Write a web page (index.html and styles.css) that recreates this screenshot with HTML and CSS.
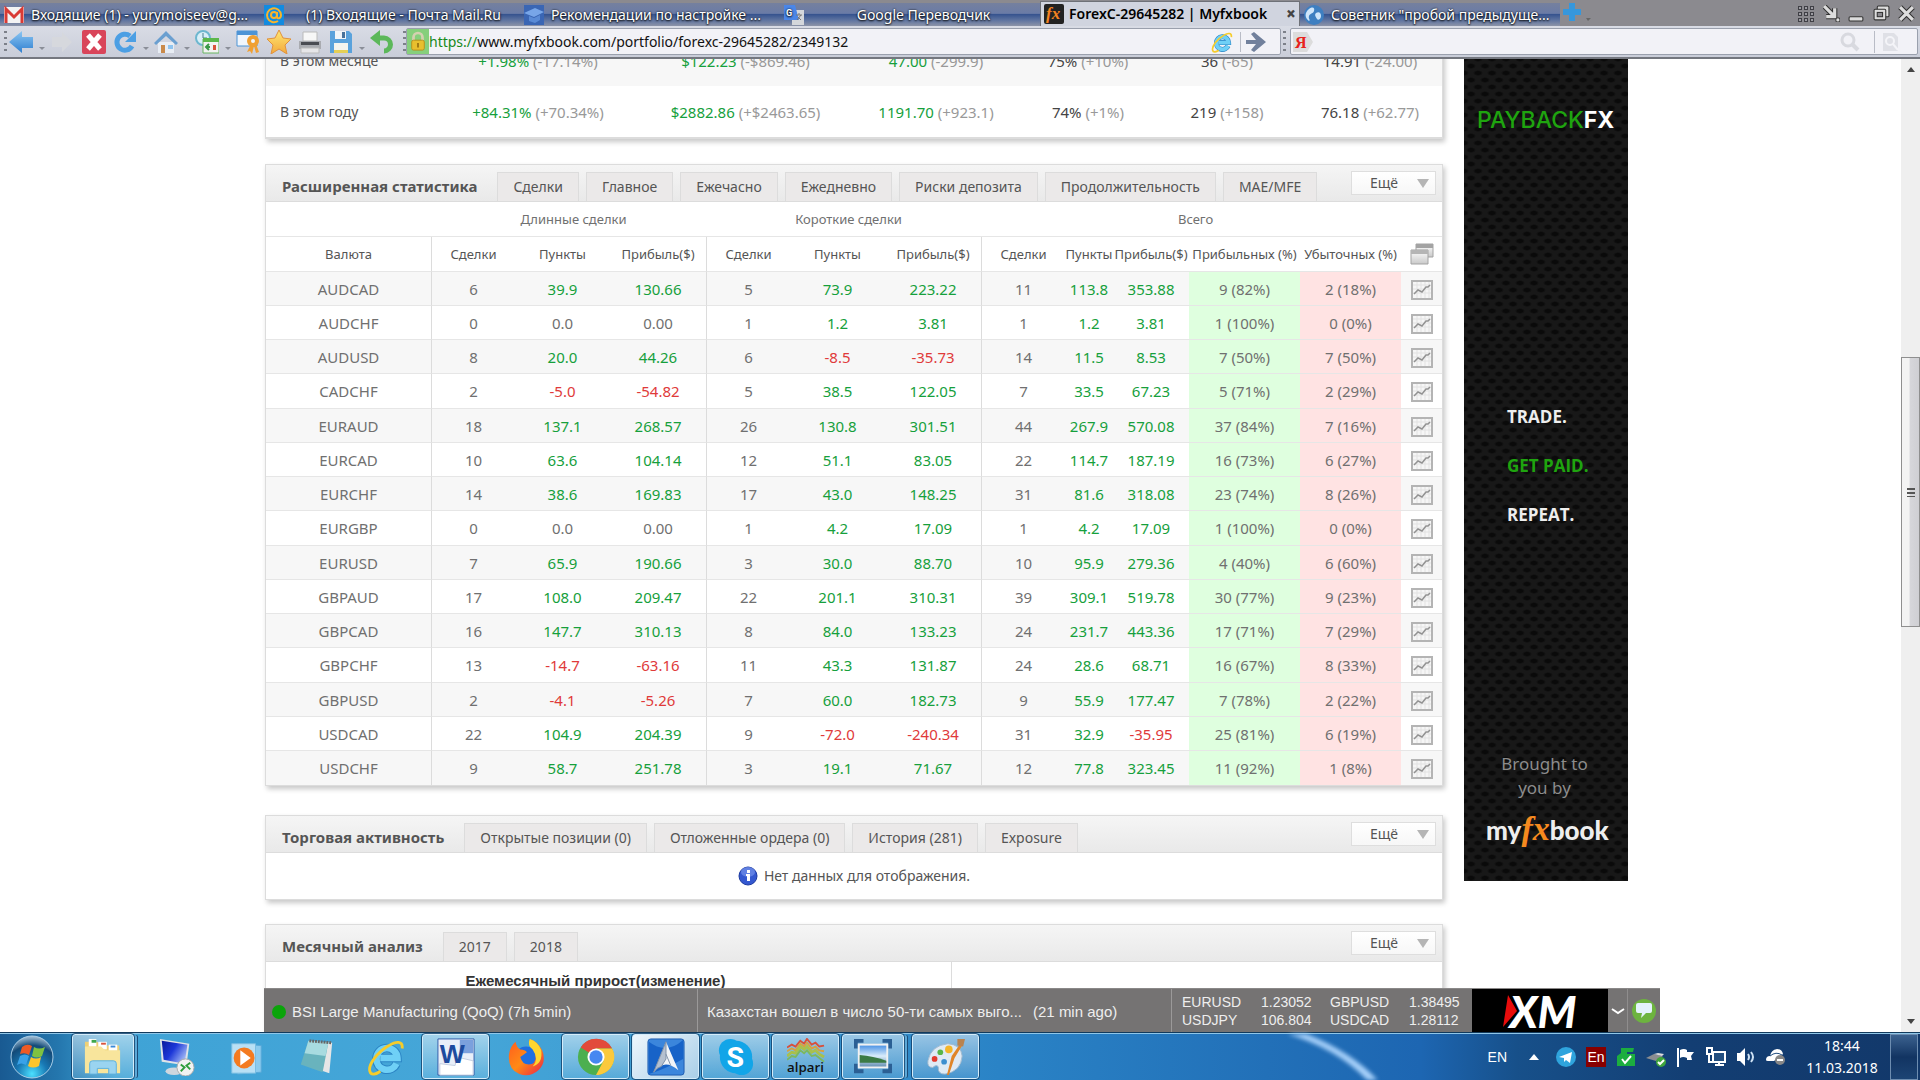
FILE: index.html
```html
<!DOCTYPE html>
<html lang="ru">
<head>
<meta charset="utf-8">
<title>ForexC-29645282 | Myfxbook</title>
<link rel="stylesheet" href="styles.css">
</head>
<body>
<svg class="defs" aria-hidden="true">
  <defs>
    <linearGradient id="gBlue" x1="0" y1="0" x2="0" y2="1"><stop offset="0" stop-color="#8cc6f2"/><stop offset="1" stop-color="#2f7fd0"/></linearGradient>
    <linearGradient id="gGold" x1="0" y1="0" x2="0" y2="1"><stop offset="0" stop-color="#ffe873"/><stop offset="1" stop-color="#f3a93c"/></linearGradient>
    <linearGradient id="gGrey" x1="0" y1="0" x2="0" y2="1"><stop offset="0" stop-color="#ffffff"/><stop offset="1" stop-color="#c9c9c9"/></linearGradient>
    <linearGradient id="gFire" x1="0" y1="0" x2="1" y2="1"><stop offset="0" stop-color="#ff5a1f"/><stop offset="0.5" stop-color="#ff8a16"/><stop offset="1" stop-color="#e8204a"/></linearGradient>
    <radialGradient id="gOrb" cx="0.5" cy="0.9" r="0.9"><stop offset="0" stop-color="#4be0ff"/><stop offset="0.4" stop-color="#1878b4"/><stop offset="0.75" stop-color="#134a78"/><stop offset="1" stop-color="#a9c3d8"/></radialGradient>
    <linearGradient id="gScreen" x1="0" y1="0" x2="1" y2="0.6"><stop offset="0" stop-color="#0a1a9c"/><stop offset="0.5" stop-color="#1c37d8"/><stop offset="1" stop-color="#9fb6f5"/></linearGradient>
    <linearGradient id="gSky" x1="0" y1="0" x2="0" y2="1"><stop offset="0" stop-color="#4f95e6"/><stop offset="0.5" stop-color="#d9ecfb"/><stop offset="1" stop-color="#6a93b5"/></linearGradient>
    <symbol id="chart" viewBox="0 0 22 20"><rect x="1" y="1" width="20" height="18" fill="#f6f6f6" stroke="#b4b4b4" stroke-width="2"/><path d="M6 2v16M10 2v16M14 2v16M18 2v16M2 5h18M2 9h18M2 13h18" stroke="#e2e2e2" fill="none"/><path d="M3 14l4-4 4 2 4-5 2 0 2-2" fill="none" stroke="#929292" stroke-width="1.5"/></symbol>
    <symbol id="ie" viewBox="0 0 40 40"><path d="M31 27a11 11 0 0 1-21-5 11 11 0 0 1 22-1H14" fill="none" stroke="#2b84c4" stroke-width="9"/><path d="M31 27a11 11 0 0 1-21-5 11 11 0 0 1 22-1H14" fill="none" stroke="#6fd0f6" stroke-width="7"/><path d="M37 11c1-8-6-8-14-3C11 15 1 28 3 35c1 5 7 3 11 0" fill="none" stroke="#f6cc2b" stroke-width="3"/></symbol>
  </defs>
</svg>
<div class="screen">
  <header class="tabstrip">
    <nav class="browser-tabs">
      <a class="btab" href="#"><svg viewBox="0 0 20 16"><rect width="20" height="16" fill="#f3f3f3"/><path d="M2 16V2l8 8 8-8v14" fill="none" stroke="#d93a34" stroke-width="3"/></svg><span>Входящие (1) - yurymoiseev@g...</span></a>
      <a class="btab center" href="#"><svg viewBox="0 0 20 20"><rect width="20" height="20" fill="#128be0"/><circle cx="10" cy="10" r="3" fill="none" stroke="#f8b42c" stroke-width="2"/><path d="M13 7v5c0 2 4 2 4-2a7 7 0 1 0-3 6" fill="none" stroke="#f8b42c" stroke-width="2"/></svg><span>(1) Входящие - Почта Mail.Ru</span></a>
      <a class="btab" href="#"><svg viewBox="0 0 20 20"><rect width="20" height="20" fill="#3a66b4"/><path d="M0 8l11-5 9 4-10 5z" fill="#78a6e8"/><path d="M5 11v5l6 2 5-3v-5l-6 3z" fill="#5a8bd6"/></svg><span>Рекомендации по настройке ...</span></a>
      <a class="btab center" href="#"><svg viewBox="0 0 20 20"><rect x="8" y="5" width="12" height="15" fill="#d4d7db"/><path d="M0 0h11l4 15H0z" fill="#4a86e8"/><text x="2" y="11" font-family="Roboto" font-size="9" font-weight="700" fill="#fff">G</text><path d="M12 10h6M15 8v2M13 15l4-5M14 12l3 3" stroke="#777" fill="none"/></svg><span>Google Переводчик</span></a>
      <a class="btab active" href="#"><svg viewBox="0 0 20 20"><rect width="20" height="20" rx="2" fill="#222"/><text x="2" y="15" font-family="Liberation Serif" font-style="italic" font-weight="700" font-size="17" fill="#f58220">fx</text></svg><span>ForexC-29645282 | Myfxbook</span><b>×</b></a>
      <a class="btab" href="#"><svg viewBox="0 0 20 20"><circle cx="10" cy="10" r="10" fill="#3e7fc1"/><path d="M5 4c4-3 6-1 5 2s-4 2-5 5 2 4 0 5c-4-3-5-8 0-12zM12 8c3-2 5 0 5 3s-3 5-4 3-3-4-1-6z" fill="#cfe5fa"/></svg><span>Советник "пробой предыдуще...</span></a>
    </nav>
    <button class="newtab" aria-label="Новая вкладка"><svg viewBox="0 0 28 20"><path d="M6 0h6v6h6v6h-6v6H6v-6H0V6h6z" fill="#3697dc"/><path d="M23 15h5l-3 3z" fill="#666"/></svg></button>
    <div class="winbtns">
      <button aria-label="Сетка"><svg viewBox="0 0 17 17"><path d="M0 3h17M0 9h17M0 15h17" stroke="#3f3f45" stroke-width="4" stroke-dasharray="4 2" /><path d="M1 3h16M1 9h16M1 15h16" stroke="#9c9ca2" stroke-width="2" stroke-dasharray="2 4"/></svg></button>
      <button aria-label="Сжать"><svg viewBox="0 0 16 16"><path d="M1 1l9 9M3 11h8V3" fill="none" stroke="#333" stroke-width="5"/><path d="M1 1l9 9M3 11h8V3" fill="none" stroke="#ddd" stroke-width="3"/><circle cx="14" cy="14" r="2" fill="#ddd" stroke="#444"/></svg></button>
      <button aria-label="Свернуть"><svg viewBox="0 0 16 16"><rect x="1" y="11" width="13" height="4" rx="1" fill="#ddd" stroke="#333"/></svg></button>
      <button aria-label="Развернуть"><svg viewBox="0 0 16 16"><rect x="4" y="1" width="11" height="10" rx="1" fill="#ddd" stroke="#333"/><rect x="1" y="4" width="11" height="10" rx="1" fill="#ddd" stroke="#333"/><rect x="4" y="7" width="5" height="4" fill="#8b8a8f" stroke="#333"/></svg></button>
      <button aria-label="Закрыть"><svg viewBox="0 0 16 16"><path d="M2 2l12 12M14 2L2 14" stroke="#333" stroke-width="5"/><path d="M2 2l12 12M14 2L2 14" stroke="#ddd" stroke-width="3"/></svg></button>
    </div>
  </header>

  <div class="toolbar">
    <div class="tools">
      <i class="grip"></i>
      <button class="tool" aria-label="Назад"><svg viewBox="0 0 24 24"><path d="M0 12L13 1v6h11v11H13v5z" fill="url(#gBlue)"/></svg></button><i class="drop"></i>
      <button class="tool" aria-label="Вперёд"><svg viewBox="0 0 24 24"><path d="M22 12L12 2v5H2v10h10v5z" fill="#d6d8dd"/></svg></button><i class="drop none"></i>
      <button class="tool" aria-label="Стоп"><svg viewBox="0 0 24 24"><rect width="24" height="24" rx="2" fill="#d9455a"/><path d="M6 5l12 14M18 5L6 19" stroke="#fff" stroke-width="5"/></svg></button><i class="gap"></i>
      <button class="tool" aria-label="Обновить"><svg viewBox="0 0 24 24"><path d="M19 16a8 8 0 1 1-2-10" fill="none" stroke="#4c9fe4" stroke-width="5"/><path d="M23 1v11H12z" fill="#4c9fe4"/></svg></button><i class="drop"></i>
      <button class="tool" aria-label="Домой"><svg viewBox="0 0 24 24"><path d="M4 12h16v11H4z" fill="#e8edf4"/><path d="M12 1L0 13l2 2 10-9 10 9 2-2z" fill="#6a9fd0"/><path d="M7 15h4v8H7z" fill="#c98a4a"/><path d="M14 15h5v4h-5z" fill="#8fc4ef"/></svg></button><i class="drop"></i>
      <button class="tool" aria-label="Журнал"><svg viewBox="0 0 24 24"><circle cx="8" cy="8" r="7" fill="#d9eff8" stroke="#6db7cf" stroke-width="2"/><path d="M8 3v5h4" stroke="#47808f" fill="none"/><path d="M8 9h16v14H8z" fill="#f2f2f2" stroke="#69b560"/><path d="M8 8h16v4H8z" fill="#5cb84c"/><path d="M11 17h4M14 14l-3 3 3 3" stroke="#3a9948" stroke-width="2" fill="none"/><path d="M18 15h3v5h-3z" fill="#d9533c"/></svg></button><i class="drop"></i>
      <button class="tool" aria-label="Пароли"><svg viewBox="0 0 24 24"><path d="M1 1h20v15H1z" fill="#f1f6fc" stroke="#4d94d6"/><path d="M1 1h20v4H1z" fill="#4d94d6"/><circle cx="17" cy="11" r="4" fill="none" stroke="#f0a033" stroke-width="4"/><path d="M15 14l-4 8 3-1 2 3 2-8 2 7 3-1-3-8z" fill="#f0a033"/></svg></button><i class="gap"></i>
      <button class="tool" aria-label="Избранное"><svg viewBox="0 0 24 24"><path d="M12 0l4 8 8 1-6 6 2 9-8-5-8 5 2-9-6-6 8-1z" fill="url(#gGold)" stroke="#e0913c"/></svg></button><i class="gap"></i>
      <button class="tool" aria-label="Печать"><svg viewBox="0 0 24 24"><path d="M5 2h14v9H5z" fill="#f7f7f7" stroke="#bbb"/><path d="M1 11h22v8H1z" fill="#a9abb0"/><path d="M3 12h18v3H3z" fill="#4a4c52"/><path d="M3 18h18v5H3z" fill="#e6e6e8" stroke="#bbb"/></svg></button><i class="gap"></i>
      <button class="tool" aria-label="Сохранить"><svg viewBox="0 0 24 24"><path d="M1 1h19l3 3v19H1z" fill="#5aa2dc"/><path d="M6 1h11v8H6z" fill="#f1f5f8"/><path d="M13 2h3v6h-3z" fill="#49729a"/><path d="M5 13h14v10H5z" fill="#f4f4ee"/><path d="M5 20h14v3H5z" fill="#e5cf55"/></svg></button><i class="drop"></i>
      <button class="tool" aria-label="Отменить"><svg viewBox="0 0 24 24"><path d="M7 8h7a6 6 0 0 1 0 13" fill="none" stroke="#5cb85a" stroke-width="5"/><path d="M0 8l10-8v16z" fill="#5cb85a"/></svg></button>
      <i class="grip"></i>
    </div>
    <div class="address">
      <span class="lock"><svg viewBox="0 0 20 24"><path d="M5 11V7a5 5 0 0 1 10 0v4" fill="none" stroke="#d5d0b0" stroke-width="3"/><rect x="3" y="10" width="14" height="11" rx="2" fill="#e8bf2e" stroke="#b98c16"/><path d="M9 13h2v5H9z" fill="#9a7412"/></svg></span>
      <p class="url"><em>https://</em>www.myfxbook.com/portfolio/forexc-29645282/2349132</p>
      <svg class="ie-small"><use href="#ie"/></svg>
      <button class="go" aria-label="Перейти"><svg viewBox="0 0 20 20"><path d="M0 8h10L5 2l3-2 12 10L8 20l-3-2 5-6H0z" fill="#71809c"/></svg></button>
    </div>
    <i class="grip"></i>
    <div class="search">
      <svg class="ya" viewBox="0 0 20 20"><path d="M0 0h14l6 10-6 10H0z" fill="#dcdcdc"/><text x="2" y="16" font-family="Liberation Serif" font-weight="700" font-size="16" fill="#e8221c">Я</text></svg>
      <input type="text" aria-label="Поиск">
      <svg class="mag" viewBox="0 0 20 20"><circle cx="8" cy="8" r="6" fill="none" stroke="#d8d9df" stroke-width="3"/><path d="M12 12l6 6" stroke="#d8d9df" stroke-width="4"/></svg>
      <i class="sep"></i>
      <svg class="mag" viewBox="0 0 20 20"><path d="M2 1h11l4 4v14H2z" fill="#dfe0e6"/><circle cx="9" cy="9" r="4" fill="none" stroke="#f4f4f8" stroke-width="2"/><path d="M12 12l5 6" stroke="#f4f4f8" stroke-width="2"/></svg>
    </div>
  </div>

  <div class="viewport">
    <div class="page">
      <main class="main">
        <table class="card summary">
          <colgroup><col class="s0"><col class="s1"><col class="s2"><col class="s3"><col class="s4"><col class="s5"><col class="s6"></colgroup>
          <tr><th scope="row">В этом месяце</th><td><b>+1.98%</b> (-17.14%)</td><td><b>$122.23</b> (-$869.46)</td><td><b>47.00</b> (-299.9)</td><td><i>75%</i> (+10%)</td><td><i>36</i> (-65)</td><td><i>14.91</i> (-24.00)</td></tr>
          <tr><th scope="row">В этом году</th><td><b>+84.31%</b> (+70.34%)</td><td><b>$2882.86</b> (+$2463.65)</td><td><b>1191.70</b> (+923.1)</td><td><i>74%</i> (+1%)</td><td><i>219</i> (+158)</td><td><i>76.18</i> (+62.77)</td></tr>
        </table>

        <section class="card stats">
          <div class="head">
            <h2>Расширенная статистика</h2>
            <nav><a href="#">Сделки</a><a href="#">Главное</a><a href="#">Ежечасно</a><a href="#">Ежедневно</a><a href="#">Риски депозита</a><a href="#">Продолжительность</a><a href="#">MAE/MFE</a></nav>
            <button class="more">Ещё</button>
          </div>
          <table class="pairs">
            <colgroup><col class="c0"><col class="c1"><col class="c2"><col class="c3"><col class="c4"><col class="c5"><col class="c6"><col class="c7"><col class="c8"><col class="c9"><col class="c10"><col class="c11"><col class="c12"></colgroup>
            <thead>
              <tr class="groups"><td></td><th colspan="3">Длинные сделки</th><th colspan="3">Короткие сделки</th><th colspan="5">Всего</th><td></td></tr>
              <tr><th>Валюта</th><th>Сделки</th><th>Пункты</th><th>Прибыль($)</th><th>Сделки</th><th>Пункты</th><th>Прибыль($)</th><th>Сделки</th><th>Пункты</th><th>Прибыль($)</th><th>Прибыльных (%)</th><th>Убыточных (%)</th><th><svg class="wins" viewBox="0 0 24 22"><path d="M6 1h17v13H6z" fill="url(#gGrey)" stroke="#a3a3a3"/><path d="M6 1h17v4H6z" fill="#a3a3a3"/><path d="M1 7h17v14H1z" fill="url(#gGrey)" stroke="#a3a3a3"/><path d="M1 7h17v4H1z" fill="#b5b5b5"/></svg></th></tr>
            </thead>
            <tbody>
              <tr><td>AUDCAD</td><td>6</td><td class="up">39.9</td><td class="up">130.66</td><td>5</td><td class="up">73.9</td><td class="up">223.22</td><td>11</td><td class="up">113.8</td><td class="up">353.88</td><td>9 (82%)</td><td>2 (18%)</td><td><svg><use href="#chart"/></svg></td></tr>
              <tr><td>AUDCHF</td><td>0</td><td>0.0</td><td>0.00</td><td>1</td><td class="up">1.2</td><td class="up">3.81</td><td>1</td><td class="up">1.2</td><td class="up">3.81</td><td>1 (100%)</td><td>0 (0%)</td><td><svg><use href="#chart"/></svg></td></tr>
              <tr><td>AUDUSD</td><td>8</td><td class="up">20.0</td><td class="up">44.26</td><td>6</td><td class="dn">-8.5</td><td class="dn">-35.73</td><td>14</td><td class="up">11.5</td><td class="up">8.53</td><td>7 (50%)</td><td>7 (50%)</td><td><svg><use href="#chart"/></svg></td></tr>
              <tr><td>CADCHF</td><td>2</td><td class="dn">-5.0</td><td class="dn">-54.82</td><td>5</td><td class="up">38.5</td><td class="up">122.05</td><td>7</td><td class="up">33.5</td><td class="up">67.23</td><td>5 (71%)</td><td>2 (29%)</td><td><svg><use href="#chart"/></svg></td></tr>
              <tr><td>EURAUD</td><td>18</td><td class="up">137.1</td><td class="up">268.57</td><td>26</td><td class="up">130.8</td><td class="up">301.51</td><td>44</td><td class="up">267.9</td><td class="up">570.08</td><td>37 (84%)</td><td>7 (16%)</td><td><svg><use href="#chart"/></svg></td></tr>
              <tr><td>EURCAD</td><td>10</td><td class="up">63.6</td><td class="up">104.14</td><td>12</td><td class="up">51.1</td><td class="up">83.05</td><td>22</td><td class="up">114.7</td><td class="up">187.19</td><td>16 (73%)</td><td>6 (27%)</td><td><svg><use href="#chart"/></svg></td></tr>
              <tr><td>EURCHF</td><td>14</td><td class="up">38.6</td><td class="up">169.83</td><td>17</td><td class="up">43.0</td><td class="up">148.25</td><td>31</td><td class="up">81.6</td><td class="up">318.08</td><td>23 (74%)</td><td>8 (26%)</td><td><svg><use href="#chart"/></svg></td></tr>
              <tr><td>EURGBP</td><td>0</td><td>0.0</td><td>0.00</td><td>1</td><td class="up">4.2</td><td class="up">17.09</td><td>1</td><td class="up">4.2</td><td class="up">17.09</td><td>1 (100%)</td><td>0 (0%)</td><td><svg><use href="#chart"/></svg></td></tr>
              <tr><td>EURUSD</td><td>7</td><td class="up">65.9</td><td class="up">190.66</td><td>3</td><td class="up">30.0</td><td class="up">88.70</td><td>10</td><td class="up">95.9</td><td class="up">279.36</td><td>4 (40%)</td><td>6 (60%)</td><td><svg><use href="#chart"/></svg></td></tr>
              <tr><td>GBPAUD</td><td>17</td><td class="up">108.0</td><td class="up">209.47</td><td>22</td><td class="up">201.1</td><td class="up">310.31</td><td>39</td><td class="up">309.1</td><td class="up">519.78</td><td>30 (77%)</td><td>9 (23%)</td><td><svg><use href="#chart"/></svg></td></tr>
              <tr><td>GBPCAD</td><td>16</td><td class="up">147.7</td><td class="up">310.13</td><td>8</td><td class="up">84.0</td><td class="up">133.23</td><td>24</td><td class="up">231.7</td><td class="up">443.36</td><td>17 (71%)</td><td>7 (29%)</td><td><svg><use href="#chart"/></svg></td></tr>
              <tr><td>GBPCHF</td><td>13</td><td class="dn">-14.7</td><td class="dn">-63.16</td><td>11</td><td class="up">43.3</td><td class="up">131.87</td><td>24</td><td class="up">28.6</td><td class="up">68.71</td><td>16 (67%)</td><td>8 (33%)</td><td><svg><use href="#chart"/></svg></td></tr>
              <tr><td>GBPUSD</td><td>2</td><td class="dn">-4.1</td><td class="dn">-5.26</td><td>7</td><td class="up">60.0</td><td class="up">182.73</td><td>9</td><td class="up">55.9</td><td class="up">177.47</td><td>7 (78%)</td><td>2 (22%)</td><td><svg><use href="#chart"/></svg></td></tr>
              <tr><td>USDCAD</td><td>22</td><td class="up">104.9</td><td class="up">204.39</td><td>9</td><td class="dn">-72.0</td><td class="dn">-240.34</td><td>31</td><td class="up">32.9</td><td class="dn">-35.95</td><td>25 (81%)</td><td>6 (19%)</td><td><svg><use href="#chart"/></svg></td></tr>
              <tr><td>USDCHF</td><td>9</td><td class="up">58.7</td><td class="up">251.78</td><td>3</td><td class="up">19.1</td><td class="up">71.67</td><td>12</td><td class="up">77.8</td><td class="up">323.45</td><td>11 (92%)</td><td>1 (8%)</td><td><svg><use href="#chart"/></svg></td></tr>
            </tbody>
          </table>
        </section>

        <section class="card activity">
          <div class="head">
            <h2>Торговая активность</h2>
            <nav><a href="#">Открытые позиции (0)</a><a href="#">Отложенные ордера (0)</a><a href="#">История (281)</a><a href="#">Exposure</a></nav>
            <button class="more">Ещё</button>
          </div>
          <p class="empty"><svg viewBox="0 0 20 20"><circle cx="10" cy="10" r="9" fill="#3458d0" stroke="#1c3aa0"/><ellipse cx="10" cy="6" rx="7" ry="5" fill="#7f9bf0" opacity=".6"/><path d="M9 4h3v3H9zM8 8h4v7H9v-5H8z" fill="#fff"/></svg>Нет данных для отображения.</p>
        </section>

        <section class="card monthly">
          <div class="head">
            <h2>Месячный анализ</h2>
            <nav><a href="#">2017</a><a href="#">2018</a></nav>
            <button class="more">Ещё</button>
          </div>
          <div class="charts"><h3>Ежемесячный прирост(изменение)</h3><div></div></div>
        </section>
      </main>

      <aside class="ad">
        <p class="brand">PAYBACK<b>FX</b></p>
        <div class="slogan"><p>TRADE.</p><p class="paid">GET PAID.</p><p>REPEAT.</p></div>
        <p class="by">Brought to<br>you by</p>
        <p class="logo">my<i>fx</i>book</p>
      </aside>
    </div>

    <div class="scrollbar"><i class="arr-up"></i><div class="thumb"><i></i></div><i class="arr-down"></i></div>

    <div class="ticker">
      <p class="event"><i></i>BSI Large Manufacturing (QoQ) (7h 5min)</p>
      <p class="news">Казахстан вошел в число 50-ти самых выго...<span>(21 min ago)</span></p>
      <dl class="quotes"><dt>EURUSD</dt><dd>1.23052</dd><dt>GBPUSD</dt><dd>1.38495</dd><dt>USDJPY</dt><dd>106.804</dd><dt>USDCAD</dt><dd>1.28112</dd></dl>
      <a class="xm" href="#"><svg viewBox="0 0 14 32"><path d="M5 0l9 16L0 32z" fill="#e80c0c"/></svg><b>XM</b></a>
      <button class="fold" aria-label="Свернуть"><svg viewBox="0 0 14 8"><path d="M1 2l6 4 6-4" fill="none" stroke="#fff" stroke-width="2"/></svg></button>
      <button class="chat" aria-label="Чат"><svg viewBox="0 0 24 24"><circle cx="12" cy="12" r="12" fill="#6db33f"/><path d="M6 4h12q2 0 2 2v6q0 2-2 2h-4l-5 5 1-5H6q-2 0-2-2V6q0-2 2-2z" fill="#e4f2fb"/></svg></button>
    </div>
  </div>

  <footer class="taskbar">
    <svg class="beam" viewBox="0 0 120 46" preserveAspectRatio="none"><path d="M4 0h22q52 18 82 46H96Q60 14 4 0z" fill="#a9d2fb"/></svg>
    <button class="start" aria-label="Пуск"><svg viewBox="0 0 44 44"><circle cx="22" cy="22" r="21" fill="url(#gOrb)" stroke="#a8cde6"/><path d="M12 12q5-4 10-1l-3 9q-4-3-9-1z" fill="#ee5a24"/><path d="M24 12q5 3 11 0l-3 9q-5 3-10 0z" fill="#7fc241"/><path d="M10 21q5-3 9 0l-3 9q-5-3-9 0z" fill="#39a2e8"/><path d="M21 22q5 3 10 0l-2 9q-6 3-11 0z" fill="#fcc52c"/></svg></button>
    <div class="apps">
      <button class="open stack" aria-label="Проводник"><svg viewBox="0 0 40 40"><path d="M1 4h13l3 4h20v28H1z" fill="#efd075"/><path d="M5 1h8v8H5z" fill="#fff"/><path d="M8 2h5v3H8z" fill="#3fa84c"/><path d="M15 4h9v8h-9z" fill="#fff"/><path d="M18 5h5v2h-5z" fill="#d9533c"/><path d="M26 7h9v8h-9z" fill="#fff"/><path d="M28 8h5v2h-5z" fill="#3b8ad8"/><path d="M1 9h17l4 4h16v24H1z" fill="#f8e59c"/><path d="M6 38V27q0-3 3-3h22q3 0 3 3v11h-8v-6H14v6z" fill="#9ad4f0" stroke="#5db0dc"/></svg></button>
      <button aria-label="Удалённый рабочий стол"><svg viewBox="0 0 40 40"><path d="M3 1l31 5-3 23L5 25z" fill="#dfe3e8"/><path d="M5 3l27 4-3 20L7 23z" fill="url(#gScreen)"/><ellipse cx="18" cy="35" rx="9" ry="4" fill="#cfd6de"/><circle cx="30" cy="31" r="9" fill="#f2f2f2" stroke="#aaa"/><path d="M25 28l4 3-4 4M35 26l-4 3 4 4" fill="none" stroke="#2f9e3c" stroke-width="2"/></svg></button>
      <button aria-label="Проигрыватель"><svg viewBox="0 0 40 40"><path d="M11 6l25 2v28l-25 2z" fill="#8ccbee" stroke="#5aa9d8"/><path d="M5 6h25v31H5z" fill="#b9e0f5" stroke="#78bde2"/><circle cx="18" cy="21" r="11" fill="#f47b20"/><path d="M14 13l11 8-11 8z" fill="#fff"/></svg></button>
      <button aria-label="Блокнот"><svg viewBox="0 0 40 40"><path d="M13 3l24 2-3 32-27-9z" fill="#e6e6e6"/><path d="M12 3l21 2-6 31L4 28z" fill="#69b3bd"/><path d="M12 3l21 2-3 14-22-3z" fill="#a8dbe0"/><path d="M13 3l23 2" stroke="#666" stroke-width="3" stroke-dasharray="2 1"/></svg></button>
      <button aria-label="Internet Explorer"><svg viewBox="0 0 40 40"><use href="#ie"/></svg></button>
      <button class="open" aria-label="Word"><svg viewBox="0 0 40 40"><path d="M1 1h38v38H1z" fill="#e9eff9" stroke="#3158a8"/><path d="M24 2h14v14H24z" fill="#7ba0dd"/><path d="M3 27l16 2 2-9 17 4v15H3z" fill="#fff" stroke="#c3cde0"/><text x="3" y="26" font-family="Liberation Sans" font-weight="700" font-size="28" fill="#1d4a9e">W</text></svg></button>
      <button aria-label="Firefox"><svg viewBox="0 0 40 40"><circle cx="20" cy="21" r="12" fill="#1f6fe0"/><path d="M9 4q1 6 5 8 5 0 7 3l-7 5q2 8 9 8 8-1 7-9-1-8-3-11Q22 6 24 1q9 3 13 12 5 12-4 21-9 8-20 4Q1 33 2 18 3 9 9 4z" fill="url(#gFire)"/><path d="M24 1q-3 7 3 11 7 10 0 18 11-3 9-17-3-9-12-12z" fill="#ffd62e"/></svg></button>
      <button class="open" aria-label="Chrome"><svg viewBox="0 0 40 40"><circle cx="20" cy="20" r="19" fill="#4caf50"/><path d="M20 20L4 10A19 19 0 0 1 37 11H20z" fill="#e24a3b"/><path d="M20 11h17a19 19 0 0 1-17 28l8-15z" fill="#fbc93d"/><circle cx="20" cy="20" r="9" fill="#fff"/><circle cx="20" cy="20" r="7" fill="#4688f1"/></svg></button>
      <button class="open current" aria-label="Avant"><svg viewBox="0 0 40 40"><rect x="1" y="1" width="38" height="38" rx="3" fill="#3b86dc" stroke="#1e5cb0"/><path d="M2 4q18 14 36-2v20Q20 32 2 38z" fill="#1763c8"/><path d="M20 4l13 30q-7-6-13-6T7 36z" fill="#f2f5f8"/><path d="M20 4v18l-5 8q-5 1-8 6zM20 17l5 12" fill="#b5c1d0" stroke="#7d8fa6"/></svg></button>
      <button class="open" aria-label="Skype"><svg viewBox="0 0 40 40"><circle cx="14" cy="13" r="12" fill="#12a5e8"/><circle cx="26" cy="27" r="12" fill="#12a5e8"/><circle cx="20" cy="20" r="17" fill="#12a5e8"/><text x="10" y="30" font-family="Roboto" font-weight="700" font-size="30" fill="#fff">S</text></svg></button>
      <button class="open" aria-label="Alpari"><svg viewBox="0 0 40 40"><path d="M0 10l5-3 4 2 5-6 4 3 3-5 5 6 4-2 4 4 5-1" fill="none" stroke="#d8503c" stroke-width="2"/><path d="M0 14l5-3 4 2 5-7 4 3 3-4 5 6 4-2 4 4 5 1" fill="none" stroke="#d8a040" stroke-width="2"/><path d="M0 19l5-4 4 1 5-7 4 3 3-3 5 6 4-2 4 4 5 3" fill="none" stroke="#a9c04c" stroke-width="3"/><path d="M0 23l5-4 4 1 5-7 4 3 3-3 5 6 4-1 4 3 5 4" fill="none" stroke="#7cb860" stroke-width="2"/><text x="0" y="36" font-family="Open Sans" font-weight="600" font-size="14" fill="#111">alpari</text></svg></button>
      <button class="open stack" aria-label="Просмотр"><svg viewBox="0 0 40 40"><path d="M2 11V3h8M30 3h8v8M38 27v8h-8M10 35H2v-8" fill="none" stroke="#2b5f94" stroke-width="4"/><path d="M4 6h32v26H4z" fill="#f1f1f1"/><path d="M6 8h28v22H6z" fill="url(#gSky)"/><path d="M6 18q14 1 28 6v2H6z" fill="#3b7a45"/></svg></button>
      <button class="open" aria-label="Paint"><svg viewBox="0 0 40 40"><path d="M22 6Q36 7 37 19q-1 16-18 19-8 0-7-7Q11 27 6 31 0 31 1 24 4 8 22 6z" fill="#dfeaf4" stroke="#a3bacf"/><circle cx="8" cy="22" r="3" fill="#e23b2e"/><circle cx="14" cy="15" r="3" fill="#58b548"/><circle cx="23" cy="12" r="4" fill="#f5b529"/><circle cx="18" cy="25" r="3" fill="#3d8fcf"/><path d="M21 39l5-20 9-13 2 2-8 13-6 18z" fill="#e08528"/><path d="M32 1l8 0-2 8-6-1z" fill="#b98350"/></svg></button>
    </div>
    <div class="tray">
      <span class="lang">EN</span>
      <svg class="tri" viewBox="0 0 10 6"><path d="M5 0l5 6H0z" fill="#fff"/></svg>
      <svg viewBox="0 0 20 20"><circle cx="10" cy="10" r="10" fill="#2fa4dd"/><path d="M3 10l13-5-2 11-4-3-2 2v-4z" fill="#fff"/></svg>
      <span class="kbd">En</span>
      <svg viewBox="0 0 20 20"><path d="M1 9l4-3V1h8l5 0-1 4h-6v2h8v12H1z" fill="#1cae3f"/><path d="M6 12l3 4 6-7" fill="none" stroke="#fff" stroke-width="2"/></svg>
      <svg viewBox="0 0 20 20"><path d="M0 11l8-4 9 2-7 5z" fill="#8a8d90"/><path d="M8 7l4-1 6 1-2 2z" fill="#ddd"/><circle cx="15" cy="15" r="5" fill="#3fa53c"/><path d="M12 15l2 2 4-4" fill="none" stroke="#fff" stroke-width="2"/></svg>
      <svg viewBox="0 0 20 20"><path d="M2 1v19" stroke="#fff" stroke-width="2"/><path d="M4 3q4-2 7 0v2h7l-3 4 1 4h-5v-2q-4-2-7 0z" fill="#fff"/></svg>
      <svg viewBox="0 0 20 20"><path d="M7 5h12v10H7zM9 18h9M13 15v3" fill="#234f80" stroke="#fff" stroke-width="2"/><path d="M1 1h5v6H1zM3 7v8h4" fill="none" stroke="#fff" stroke-width="2"/></svg>
      <svg viewBox="0 0 20 20"><path d="M1 6h3l5-5v18l-5-5H1z" fill="#fff"/><path d="M12 7q2 3 0 6M15 5q4 5 0 10" fill="none" stroke="#cfe2f4" stroke-width="2"/></svg>
      <svg viewBox="0 0 20 20"><path d="M0 13q0-4 4-4 1-6 7-7 5 0 6 5l-9 7H2q-2 0-2-1z" fill="#fff"/><path d="M4 9q6-5 12-1" stroke="#234f80" fill="none"/><circle cx="14" cy="13" r="5" fill="#888"/><path d="M11 13h6" stroke="#fff" stroke-width="2"/></svg>
      <time>18:44<br>11.03.2018</time>
      <button class="desk" aria-label="Свернуть все окна"></button>
    </div>
  </footer>
</div>
</body>
</html>
```
FILE: styles.css
```css
* { box-sizing: border-box; }
body { margin: 0; background: #fff; color: #555; font: 15px/20px "Noto Sans", sans-serif; }
p, h2, h3, dl, dd { margin: 0; }
a { color: inherit; text-decoration: none; }
button { border: 0; background: none; padding: 0; font: inherit; color: inherit; }
svg { display: block; flex: none; }
.defs { position: absolute; width: 0; height: 0; }
.screen { height: 100vh; display: flex; flex-direction: column; overflow: hidden; }

/* browser tab strip */
.tabstrip { height: 26px; flex: none; display: flex; background: #8b8a8f; }
.browser-tabs { display: flex; flex: 0 1 1560px; align-items: flex-end; }
.btab { flex: 1 1 0; min-width: 0; height: 23px; display: flex; align-items: center; gap: 7px; padding: 0 4px; white-space: nowrap; color: #fff; text-shadow: 0 0 2px #111, 0 1px 2px #111; font-size: 14px; line-height: 22px; background: linear-gradient(#75809e 0, #6a7ba6 45%, #37548f 50%, #5f74a0 75%, #8c94a8 100%); }
.btab svg { width: 20px; height: 20px; }
.btab.center span { flex: 1; text-align: center; }
.btab.active { height: 25px; background: #d0d4df; color: #000; text-shadow: none; font-weight: 600; gap: 5px; padding: 0 3px; border: 1px solid #6e7178; border-bottom: 0; }
.btab.active b { margin-left: auto; font-size: 17px; color: #444; }
.newtab { margin-left: 3px; }
.newtab svg { width: 28px; height: 20px; }
.winbtns { margin-left: auto; display: flex; align-items: center; gap: 8px; padding-right: 5px; }
.winbtns svg { width: 17px; height: 17px; }

/* browser toolbar */
.toolbar { height: 33px; flex: none; display: flex; align-items: center; padding: 0 2px; background: linear-gradient(#d9dce5, #c9cdd9); border-bottom: 2px solid #74777f; }
.tools { display: flex; align-items: center; width: 404px; flex: none; }
.tool svg { width: 24px; height: 24px; }
.grip { width: 3px; height: 22px; margin: 0 2px; flex: none; background: repeating-linear-gradient(#7c8089 0 2px, transparent 2px 6px); }
.tools .grip:last-child { margin: 0 0 0 auto; }
.drop { width: 17px; height: 16px; display: flex; align-items: flex-end; justify-content: center; flex: none; }
.drop::after { content: ""; border: 3px solid transparent; border-top-color: #8a8e98; border-bottom: 0; }
.drop.none { width: 8px; }
.drop.none::after { display: none; }
.gap { width: 7px; flex: none; }
.address { flex: 1 1 874px; height: 27px; display: flex; align-items: center; background: #f2f2f7; border: 1px solid #9aa0ad; border-radius: 2px; }
.lock { width: 22px; height: 100%; background: #86cf7c; display: grid; place-items: center; }
.lock svg { width: 18px; height: 22px; }
.url { flex: 1; color: #111; font-size: 14px; white-space: nowrap; }
.url em { font-style: normal; color: #16891b; }
.ie-small { width: 22px; height: 22px; }
.go { margin-left: 7px; padding: 0 14px 0 5px; border-left: 1px solid #b9bcc6; }
.go svg { width: 20px; height: 20px; }
.search { flex: 1 1 627px; height: 27px; display: flex; align-items: center; padding: 0 16px 0 2px; background: #f2f2f7; border: 1px solid #9aa0ad; border-radius: 2px; margin-left: 2px; }
.search input { flex: 1; min-width: 0; border: 0; background: none; outline: 0; }
.ya, .mag { width: 20px; height: 20px; }
.sep { width: 1px; height: 22px; margin: 0 6px 0 14px; background: #b9bcc6; }

/* web page */
.viewport { flex: 1; min-height: 0; position: relative; display: flex; overflow: hidden; }
.page { flex: 1; min-width: 0; display: grid; grid-template-columns: minmax(0, 1fr) 164px; gap: 21px; padding: 0 273px 0 265px; align-items: start; }
.card { border: 1px solid #dcdcdc; background: #fff; box-shadow: 2px 3px 5px rgba(0, 0, 0, .22); }
.summary { width: 100%; margin-top: -25px; table-layout: fixed; border-collapse: separate; border-spacing: 0; border-bottom-width: 2px; }
.summary td, .summary th { height: 51px; padding: 0; text-align: center; white-space: nowrap; color: #999; font-weight: 400; }
.summary th { text-align: left; padding-left: 14px; color: #555; font-size: 14px; }
.summary tr:first-child > * { background: #f7f7f7; }
.summary b { font-weight: 400; color: #16a03c; }
.summary i { font-style: normal; color: #444; }
.s0 { width: 171px; } .s1 { width: 202px; } .s2 { width: 213px; } .s3 { width: 168px; } .s4 { width: 136px; } .s5 { width: 142px; } .s6 { width: 144px; }

.stats { margin-top: 25px; }
.activity { margin-top: 29px; }
.monthly { margin-top: 24px; }
.head { height: 37px; display: flex; align-items: flex-end; padding: 0 6px 0 16px; background: linear-gradient(#f5f5f5, #e9e9e9); border-bottom: 1px solid #dcdcdc; }
.head h2 { font-size: 15px; line-height: 20px; font-weight: 700; color: #555; margin-bottom: 5px; margin-right: 20px; white-space: nowrap; }
.head nav { display: flex; gap: 7px; flex: 1; }
.head nav a { height: 29px; padding: 4px 15px 0; font-size: 14px; background: #ebe9e9; border: 1px solid #dcdcdc; border-bottom: 0; white-space: nowrap; }
.more { flex: none; width: 85px; height: 24px; margin-bottom: 6px; padding: 0 6px 0 18px; display: flex; align-items: center; justify-content: space-between; font-size: 14px; border: 1px solid #dedede; background: linear-gradient(#fff, #f7f7f7); }
.more::after { content: ""; border: 6px solid transparent; border-top: 9px solid #b5b5b5; border-bottom: 0; }

.pairs { width: 100%; table-layout: fixed; border-collapse: separate; border-spacing: 0; color: #707070; text-align: center; }
.pairs td, .pairs th { padding: 0; height: 34px; border-bottom: 1px solid #e6e6e6; white-space: nowrap; font-weight: 400; }
.pairs th { font-size: 13px; color: #555; height: 35px; }
.pairs .groups th { color: #707070; padding-left: 8px; }
.pairs svg { width: 22px; height: 20px; margin: 2px auto 0; }
.pairs thead .wins { width: 24px; height: 22px; margin: 0 auto; }
.pairs tbody tr:nth-child(odd) { background: #f7f7f7; }
.pairs tbody tr:nth-child(4n) td { height: 35px; }
.pairs tbody tr:last-child td { border-bottom: 0; }
.pairs tr:not(.groups) > :nth-child(1), .pairs tr:not(.groups) > :nth-child(4), .pairs tr:not(.groups) > :nth-child(7) { border-right: 1px solid #dcdcdc; }
.pairs tbody td:nth-child(11) { background: #dfffdf; }
.pairs tbody td:nth-child(12) { background: #ffe3e3; }
.pairs .up { color: #16a03c; }
.pairs .dn { color: #e03a3a; }
.c0 { width: 166px; } .c1, .c4, .c7 { width: 83px; } .c2, .c5 { width: 95px; } .c3 { width: 97px; } .c6 { width: 97px; } .c8 { width: 48px; } .c9 { width: 76px; } .c10 { width: 111px; } .c11 { width: 101px; } .c12 { width: 41px; }

.empty { height: 46px; display: flex; align-items: center; justify-content: center; gap: 6px; font-size: 14px; }
.empty svg { width: 20px; height: 20px; }
.charts { display: grid; grid-template-columns: 7fr 5fr; height: 120px; }
.charts h3 { font: 700 15px/20px "Liberation Sans", sans-serif; color: #333; text-align: center; padding: 9px 26px 0 0; border-right: 1px solid #dcdcdc; }

/* banner */
.ad { height: 822px; display: flex; flex-direction: column; color: #eee; background-color: #181818; background-image: radial-gradient(ellipse 5px 3px at 50% 50%, #0a0a0a 0 50%, transparent), radial-gradient(ellipse 5px 3px at 50% 50%, #0a0a0a 0 50%, transparent); background-size: 14px 14px; background-position: 0 0, 7px 7px; }
.brand { padding: 46px 0 0 13px; font: 500 23px/30px Inter, sans-serif; color: #1fa40f; white-space: nowrap; }
.brand b { color: #fff; font-weight: 700; }
.slogan { padding: 257px 0 0 43px; font: 700 17px/49px "Open Sans", sans-serif; }
.paid { color: #1fa40f; }
.by { margin-top: 213px; text-align: center; padding-right: 3px; font: 400 17px/24px "Noto Sans", sans-serif; color: #8c8c8c; }
.logo { padding: 12px 0 0 22px; font: 900 26px/34px Lato, sans-serif; white-space: nowrap; }
.logo i { font: italic 700 34px/34px "Liberation Serif", serif; color: #f58a1f; }

.scrollbar { width: 19px; background: #efefef; display: flex; flex-direction: column; align-items: center; padding: 8px 0; }
.arr-up { border: 4px solid transparent; border-bottom: 5px solid #444; border-top: 0; }
.arr-down { border: 4px solid transparent; border-top: 5px solid #444; border-bottom: 0; margin-top: auto; }
.thumb { width: 100%; height: 270px; margin-top: 285px; border: 1px solid #8f8f8f; background: linear-gradient(90deg, #f3f3f3 0 40%, #d6d6da 50%, #cfcfd3); display: grid; place-items: center; }
.thumb i { width: 8px; height: 9px; background: repeating-linear-gradient(#555 0 2px, transparent 2px 4px); }

/* ticker over the page bottom */
.ticker { position: absolute; left: 264px; right: 260px; bottom: 0; height: 44px; display: flex; align-items: stretch; background: #757373; border-top: 1px solid #8a8888; color: #eee; font: 15px/20px "Liberation Sans", sans-serif; white-space: nowrap; }
.ticker > p { display: flex; align-items: center; padding-top: 2px; border-right: 1px solid #9b9999; }
.event { flex: 434 1 0; padding-left: 8px; gap: 6px; }
.event i { width: 14px; height: 14px; border-radius: 50%; background: #0aa40a; }
.news { flex: 474 1 0; padding-left: 9px; gap: 11px; }
.quotes { width: 300px; padding: 4px 14px 0 10px; display: grid; grid-template-columns: 79px 69px 79px auto; font-size: 14px; line-height: 18px; align-content: start; }
.xm { width: 136px; background: #000; display: flex; align-items: center; justify-content: center; }
.xm svg { width: 14px; height: 32px; }
.xm b { font: italic 900 44px/44px Lato, sans-serif; color: #fff; margin-left: -8px; }
.fold { width: 20px; display: grid; place-items: center; border-right: 1px solid #8f8d8d; }
.fold svg { width: 14px; height: 8px; }
.chat { width: 32px; display: grid; place-items: center; }
.chat svg { width: 24px; height: 24px; }

/* desktop taskbar */
.taskbar { height: 48px; flex: none; display: flex; position: relative; border-top: 1px solid #123a5c; box-shadow: inset 0 1px #8fc6e8; background: linear-gradient(90deg, #195a92 0, #2476ad 3%, #3fa3d6 6%, #45a6d8 24%, #3a97d0 40%, #2a83c6 52%, #2270b8 66%, #1d66b2 74%, #17508a 79%, #133e73 88%, #12386a 100%); }
.beam { position: absolute; left: 1284px; top: 1px; width: 104px; height: 46px; filter: blur(2px); }
.start { width: 64px; display: grid; place-items: center; position: relative; }
.start svg { width: 44px; height: 44px; }
.apps { display: flex; gap: 3px; padding: 1px 0 1px 8px; }
.apps button { width: 67px; display: grid; place-items: center; border-radius: 3px; position: relative; }
.apps svg { width: 38px; height: 38px; }
.apps .open { border: 1px solid #d4ecfa; background: linear-gradient(rgba(255, 255, 255, .5), rgba(255, 255, 255, .12)); outline: 1px solid rgba(10, 50, 90, .7); outline-offset: 0; }
.apps .current { background: linear-gradient(135deg, #eef6fc, #a9cfe8); }
.apps .stack { width: 62px; margin-right: 5px; box-shadow: 4px 0 0 -1px #5da9d8, 5px 0 0 -1px #1c4d7a; }
.tray { margin-left: auto; display: flex; align-items: center; gap: 10px; color: #fff; position: relative; }
.tray svg { width: 20px; height: 20px; }
.tray .tri { width: 10px; height: 6px; margin: 0 7px 0 12px; }
.lang { font-size: 14px; font-family: "Liberation Sans", sans-serif; }
.kbd { width: 20px; height: 20px; background: #800; font: 14px/20px "Liberation Sans", sans-serif; text-align: center; }
.tray time { width: 92px; text-align: center; font-size: 14px; line-height: 22px; margin-right: -8px; }
.desk { width: 28px; height: 46px; border: 1px solid #6d8db0; background: linear-gradient(#3c628f, #123462 50%, #1c4474); margin-right: 2px; }
```
